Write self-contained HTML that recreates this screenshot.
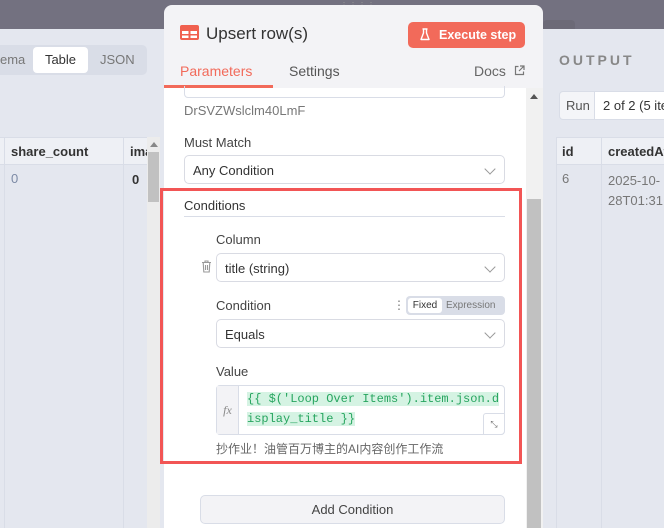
<!DOCTYPE html>
<html><head><meta charset="utf-8"><style>
*{box-sizing:border-box;margin:0;padding:0}
body{width:664px;height:528px;overflow:hidden;position:relative;background:#e4e7ef;font-family:"Liberation Sans","Noto Sans CJK SC",sans-serif;color:#333;font-size:13px}
.abs{position:absolute}
.top{left:0;top:0;width:664px;height:29px;background:#737180}
.lp{left:0;top:29px;width:164px;height:499px;background:#e4e7ef}
.rp{left:543px;top:29px;width:121px;height:499px;background:#e4e7ef}
.modal{left:164px;top:5px;width:379px;height:523px;background:#f3f3f6;border-radius:8px 8px 0 0}
.content{left:164px;top:88px;width:362px;height:440px;background:#fff}
.sel{position:absolute;height:29px;border:1px solid #d9dbe3;border-radius:5px;background:#fff;font-size:13px;padding:7px 8px;color:#333}
.chev{position:absolute;right:10px;top:9px;width:8px;height:8px;border-right:1.3px solid #999;border-bottom:1.3px solid #999;transform:rotate(45deg)}
.lbl{position:absolute;font-size:13px;color:#444}
</style></head><body>
<div class="abs top"></div>
<div class="abs" style="left:340px;top:0;width:30px;height:8px;color:#999;font-size:8px;letter-spacing:1px;line-height:6px">⋮⋮⋮⋮</div>
<div class="abs lp"></div>
<div class="abs" style="left:0;top:45px;width:147px;height:30px;background:#d9dde7;border-radius:0 5px 5px 0"></div>
<div class="abs" style="left:0;top:52px;font-size:13px;color:#777">ema</div>
<div class="abs" style="left:33px;top:47px;width:55px;height:26px;background:#fff;border-radius:4px;font-size:13px;text-align:center;line-height:26px;color:#333">Table</div>
<div class="abs" style="left:100px;top:52px;font-size:13px;color:#777">JSON</div>
<div class="abs" style="left:0;top:137px;width:147px;height:28px;background:#eef0f5;border-top:1px solid #d9dde7;border-bottom:1px solid #d9dde7"></div>
<div class="abs" style="left:4px;top:137px;width:1px;height:391px;background:#d9dde7"></div>
<div class="abs" style="left:123px;top:137px;width:1px;height:391px;background:#d9dde7"></div>
<div class="abs" style="left:11px;top:144px;font-weight:bold;font-size:13px;color:#333">share_count</div>
<div class="abs" style="left:130px;top:144px;font-weight:bold;font-size:13px;color:#333">ima</div>
<div class="abs" style="left:11px;top:171px;font-size:13px;color:#7c8aa5">0</div>
<div class="abs" style="left:132px;top:172px;font-size:13px;font-weight:bold;color:#333">0</div>
<div class="abs" style="left:147px;top:137px;width:13px;height:391px;background:#ececec"></div>
<div class="abs" style="left:148px;top:152px;width:11px;height:50px;background:#c1c1c1"></div>
<div class="abs" style="left:150px;top:142px;width:0;height:0;border-left:4px solid transparent;border-right:4px solid transparent;border-bottom:5px solid #888"></div>

<div class="abs rp"></div>
<div class="abs" style="left:543px;top:20px;width:32px;height:9px;background:#6c6a77;border-radius:4px 4px 0 0"></div>
<div class="abs" style="left:559px;top:52px;font-size:14px;font-weight:bold;letter-spacing:3px;color:#888">OUTPUT</div>
<div class="abs" style="left:559px;top:91px;width:110px;height:29px;border:1px solid #d9dde7;border-radius:4px;background:#f4f5f8"></div>
<div class="abs" style="left:594px;top:92px;width:70px;height:27px;background:#fff;border-left:1px solid #d9dde7"></div>
<div class="abs" style="left:566px;top:98px;font-size:13px;color:#555">Run</div>
<div class="abs" style="left:603px;top:98px;font-size:13px;color:#333;white-space:nowrap">2 of 2 (5 items)</div>
<div class="abs" style="left:556px;top:137px;width:108px;height:28px;background:#eef0f5;border-top:1px solid #d9dde7;border-bottom:1px solid #d9dde7"></div>
<div class="abs" style="left:556px;top:137px;width:1px;height:391px;background:#d9dde7"></div>
<div class="abs" style="left:601px;top:137px;width:1px;height:391px;background:#d9dde7"></div>
<div class="abs" style="left:562px;top:144px;font-weight:bold;font-size:13px">id</div>
<div class="abs" style="left:608px;top:144px;font-weight:bold;font-size:13px;white-space:nowrap">createdAt</div>
<div class="abs" style="left:562px;top:171px;font-size:13px;color:#777">6</div>
<div class="abs" style="left:608px;top:171px;font-size:13px;color:#777;line-height:20px;white-space:nowrap">2025-10-<br>28T01:31:1</div>

<div class="abs modal"></div>
<svg class="abs" style="left:180px;top:25px" width="19" height="15" viewBox="0 0 19 15"><rect x="0" y="0" width="19" height="15" rx="2" fill="#f0604f"/><rect x="2" y="6" width="6.5" height="3" fill="#fff"/><rect x="10.5" y="6" width="6.5" height="3" fill="#fff"/><rect x="2" y="10.5" width="6.5" height="2.5" fill="#fff"/><rect x="10.5" y="10.5" width="6.5" height="2.5" fill="#fff"/></svg>
<div class="abs" style="left:206px;top:24px;font-size:17px;color:#333">Upsert row(s)</div>
<div class="abs" style="left:408px;top:22px;width:117px;height:26px;background:#f26a5a;border-radius:5px;color:#fff;font-size:12.5px;font-weight:bold;line-height:26px;padding-left:31px;white-space:nowrap">Execute step</div>
<svg class="abs" style="left:420px;top:28px" width="10" height="13" viewBox="0 0 10 13"><path d="M3.5 1v4L1 11.5h8L6.5 5V1M2.5 1h5" stroke="#fff" stroke-width="1.4" fill="none" stroke-linejoin="round"/></svg>
<div class="abs" style="left:180px;top:63px;font-size:14px;color:#f26a5a">Parameters</div>
<div class="abs" style="left:164px;top:85px;width:109px;height:3px;background:#f26a5a"></div>
<div class="abs" style="left:289px;top:63px;font-size:14px;color:#555">Settings</div>
<div class="abs" style="left:474px;top:63px;font-size:14px;color:#666">Docs</div>
<svg class="abs" style="left:514px;top:65px" width="11" height="11" viewBox="0 0 11 11"><path d="M4.5 1.5H1.5v8h8v-3M6 1h4v4M10 1L5 6" stroke="#777" stroke-width="1.2" fill="none"/></svg>

<div class="abs content"></div>
<div class="abs" style="left:184px;top:86px;width:321px;height:12px;border:1px solid #d9dde7;border-top:none;border-radius:0 0 4px 4px"></div>
<div class="abs" style="left:184px;top:103px;font-size:13px;color:#777">DrSVZWslclm40LmF</div>
<div class="lbl" style="left:184px;top:135px">Must Match</div>
<div class="sel" style="left:184px;top:155px;width:321px">Any Condition<div class="chev"></div></div>
<div class="abs" style="left:526px;top:88px;width:17px;height:440px;background:#f1f1f1"></div>
<div class="abs" style="left:527px;top:199px;width:14px;height:329px;background:#c1c1c1"></div>
<div class="abs" style="left:530px;top:94px;width:0;height:0;border-left:4px solid transparent;border-right:4px solid transparent;border-bottom:5px solid #555"></div>

<div class="abs" style="left:160px;top:188px;width:362px;height:276px;border:3px solid #f25555"></div>
<div class="lbl" style="left:184px;top:198px;color:#333">Conditions</div>
<div class="abs" style="left:184px;top:216px;width:321px;height:1px;background:#d9dde7"></div>
<div class="lbl" style="left:216px;top:232px">Column</div>
<svg class="abs" style="left:201px;top:260px" width="11" height="13" viewBox="0 0 11 13"><path d="M1 2.5h9M4 2.5V1h3v1.5M2.2 2.5l.6 9.5h5.4l.6-9.5M4.5 5v5M6.5 5v5" stroke="#999" stroke-width="1.1" fill="none"/></svg>
<div class="sel" style="left:216px;top:253px;width:289px">title (string)<div class="chev"></div></div>
<div class="lbl" style="left:216px;top:298px">Condition</div>
<div class="abs" style="left:393px;top:298px;font-size:12px;color:#777">⋮</div>
<div class="abs" style="left:406px;top:296px;width:99px;height:19px;background:#d9dde7;border-radius:4px"></div>
<div class="abs" style="left:408px;top:298px;width:34px;height:15px;background:#fff;border-radius:3px;font-size:10px;text-align:center;line-height:15px;color:#333">Fixed</div>
<div class="abs" style="left:446px;top:298px;font-size:10px;line-height:15px;color:#777">Expression</div>
<div class="sel" style="left:216px;top:319px;width:289px">Equals<div class="chev"></div></div>
<div class="lbl" style="left:216px;top:364px">Value</div>
<div class="abs" style="left:216px;top:385px;width:289px;height:50px;border:1px solid #d9dde7;border-radius:4px;background:#fff"></div>
<div class="abs" style="left:217px;top:386px;width:22px;height:48px;background:#f3f3f6;border-right:1px solid #d9dde7;font-family:'Liberation Serif',serif;font-style:italic;color:#888;font-size:12px;line-height:48px;text-align:center">fx</div>
<div class="abs" style="left:247px;top:389px;font-family:'Liberation Mono',monospace;font-size:12px;color:#27a55f;line-height:20px;width:260px;word-break:break-all"><span style="background:#d5f3e3">{{ $('Loop Over Items').item.json.d</span><br><span style="background:#d5f3e3">isplay_title }}</span></div>
<div class="abs" style="left:483px;top:413px;width:22px;height:22px;border:1px solid #d9dde7;border-radius:3px 0 4px 0;background:#fff;font-size:9px;color:#777;text-align:center;line-height:20px">⤡</div>
<div class="abs" style="left:216px;top:440px;font-size:12px;color:#666">抄作业！油管百万博主的AI内容创作工作流</div>

<div class="abs" style="left:200px;top:495px;width:305px;height:29px;border:1px solid #d9dde7;border-radius:5px;background:#f3f3f6;text-align:center;line-height:27px;font-size:13px;color:#444">Add Condition</div>
</body></html>
